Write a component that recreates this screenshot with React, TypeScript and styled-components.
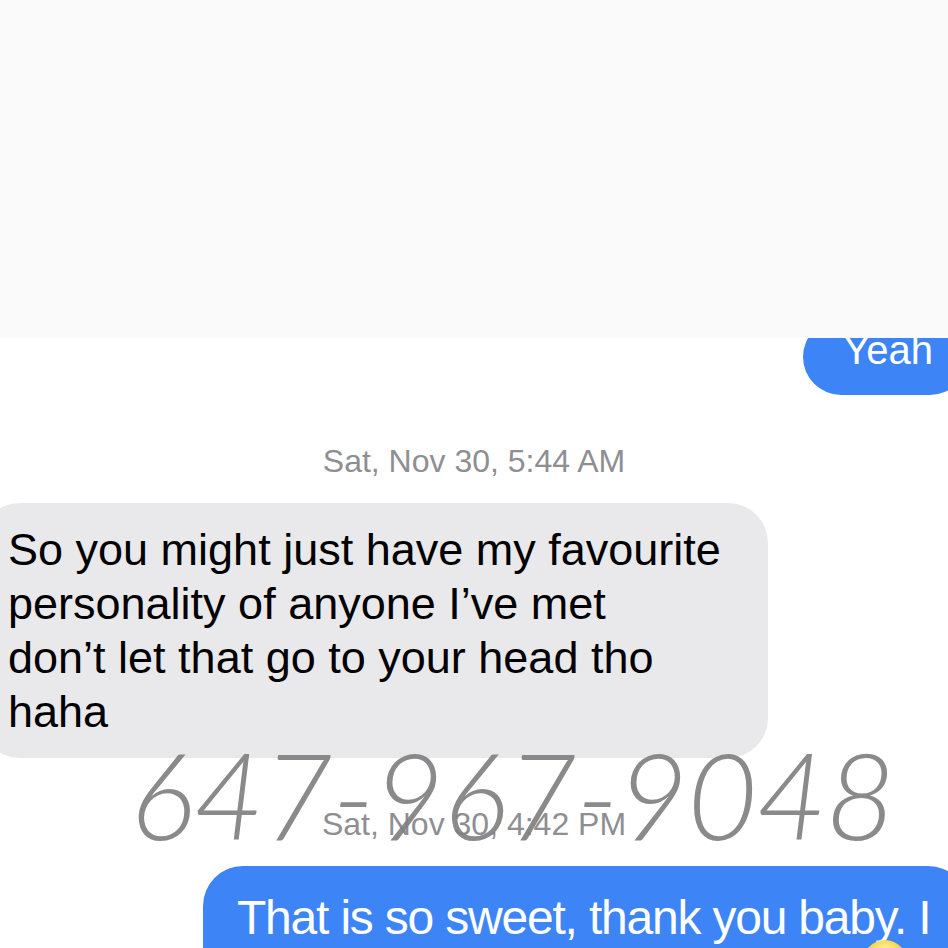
import React from 'react'
import styled, { createGlobalStyle } from 'styled-components'

const GlobalStyle = createGlobalStyle`
  html, body {
    margin: 0;
    padding: 0;
    background: #fff;
  }
  body {
    font-family: "Liberation Sans", Arial, sans-serif;
  }
`;

const receivedLines = [
  'So you might just have my favourite',
  'personality of anyone I\u2019ve met',
  'don\u2019t let that go to your head tho',
  'haha',
];

export default function App() {
  return (
    <>
      <GlobalStyle />
      <Screen>
        <BlankPanel />
        <Thread>
          <ClippedRow>
            <YeahBubble>Yeah</YeahBubble>
          </ClippedRow>
          <Stamp>Sat, Nov 30, 5:44 AM</Stamp>
          <ReceivedBubble>
            {receivedLines.map(line => (
              <ReceivedLine key={line}>{line}</ReceivedLine>
            ))}
          </ReceivedBubble>
          <Stamp>Sat, Nov 30, 4:42 PM</Stamp>
          <SentRow>
            <SentBubble>
              <SentLine>That is so sweet, thank you baby. I</SentLine>
              <EmojiLine>
                <Emoji />
              </EmojiLine>
            </SentBubble>
          </SentRow>
        </Thread>
        <Watermark>647-967-9048</Watermark>
      </Screen>
    </>
  )
}

const Screen = styled.div`
  position: relative;
  width: 948px;
  height: 948px;
  overflow: hidden;
  background: #fff;
`;

const BlankPanel = styled.div`
  height: 338px;
  background: #fafafa;
`;

const Thread = styled.div`
  display: flex;
  flex-direction: column;
`;

const ClippedRow = styled.div`
  height: 57px;
  overflow: hidden;
  display: flex;
  justify-content: flex-end;
  align-items: flex-end;
`;

const YeahBubble = styled.div`
  background: #3d84f6;
  color: #fff;
  font-size: 40px;
  line-height: 46px;
  padding: 8px 35px 22px 40px;
  border-radius: 40px;
  margin-right: -20px;
  white-space: nowrap;
`;

const Stamp = styled.div`
  text-align: center;
  color: #8e8e93;
  font-size: 32px;
  line-height: 36px;
  margin: 48px 0 24px;
`;

const ReceivedBubble = styled.div`
  align-self: flex-start;
  width: 788px;
  margin-left: -20px;
  box-sizing: border-box;
  background: #e9e9eb;
  border-radius: 40px;
  padding: 20px 30px 19px 28px;
`;

const ReceivedLine = styled.div`
  color: #000;
  font-size: 45px;
  line-height: 54px;
  white-space: nowrap;
`;

const SentRow = styled.div`
  display: flex;
  justify-content: flex-end;
`;

const SentBubble = styled.div`
  background: #3d84f6;
  color: #fff;
  padding: 22px 38px 20px 34px;
  border-radius: 40px;
  margin-right: -20px;
  width: 765px;
  box-sizing: border-box;
`;

const SentLine = styled.div`
  font-size: 48px;
  line-height: 60px;
  letter-spacing: -1.2px;
  white-space: nowrap;
  height: 60px;
`;

const EmojiLine = styled.div`
  display: flex;
  height: 50px;
  margin-top: -8px;
  padding-left: 626px;
`;

const Emoji = styled.span`
  width: 44px;
  height: 44px;
  border-radius: 50%;
  background: radial-gradient(circle at 50% 30%, #fff7b0 0%, #f6d23c 45%, #e8a81c 100%);
`;

const Watermark = styled.div`
  position: absolute;
  left: 130px;
  top: 729px;
  font-family: Lato, "Open Sans", sans-serif;
  font-style: italic;
  font-weight: 300;
  font-size: 121px;
  line-height: 130px;
  letter-spacing: -1px;
  color: rgba(128, 128, 128, 0.92);
  white-space: nowrap;
`;
